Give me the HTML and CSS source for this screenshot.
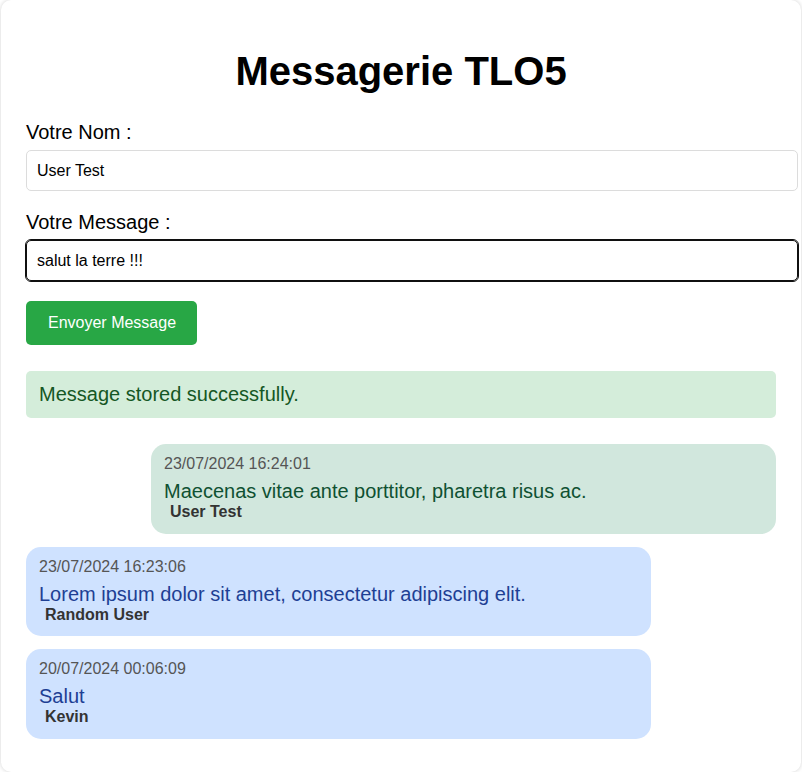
FILE: index.html
```html
<!DOCTYPE html>
<html lang="fr">
<head>
<meta charset="utf-8">
<title>Messagerie TLO5</title>
<link rel="stylesheet" href="styles.css">
</head>
<body>
<div class="container">
  <h1 class="title">Messagerie TLO5</h1>
  <form class="form">
    <label class="label" for="nom">Votre Nom :</label>
    <input class="input" id="nom" type="text" value="User Test">
    <label class="label" for="msg">Votre Message :</label>
    <input class="input input-focus" id="msg" type="text" value="salut la terre !!!">
    <button class="btn" type="button">Envoyer Message</button>
  </form>
  <div class="alert">Message stored successfully.</div>
  <div class="messages">
    <div class="bubble bubble-own">
      <div class="date">23/07/2024 16:24:01</div>
      <div class="text">Maecenas vitae ante porttitor, pharetra risus ac.</div>
      <div class="author">User Test</div>
    </div>
    <div class="bubble bubble-other">
      <div class="date">23/07/2024 16:23:06</div>
      <div class="text">Lorem ipsum dolor sit amet, consectetur adipiscing elit.</div>
      <div class="author">Random User</div>
    </div>
    <div class="bubble bubble-other">
      <div class="date">20/07/2024 00:06:09</div>
      <div class="text">Salut</div>
      <div class="author">Kevin</div>
    </div>
  </div>
</div>
</body>
</html>
```

FILE: styles.css
```css
html, body {
  margin: 0;
  padding: 0;
  background: #ffffff;
}
body {
  font-family: Arial, "Liberation Sans", sans-serif;
  color: #000;
}
.container {
  width: 750px;
  margin: 0 auto;
  padding: 21px 25px 33px;
  background: #fff;
  border-radius: 10px;
  box-shadow: 0 0 4px rgba(0, 0, 0, 0.18);
}
.title {
  font-size: 40px;
  font-weight: bold;
  text-align: center;
  margin: 27px 0 27px;
  line-height: 46px;
}
.form {
  display: flex;
  flex-direction: column;
  align-items: flex-start;
}
.label {
  font-size: 20px;
  line-height: 23px;
  margin-bottom: 6px;
}
.input {
  width: 750px;
  box-sizing: content-box;
  padding: 10px;
  font-size: 16px;
  font-family: Arial, "Liberation Sans", sans-serif;
  border: 1px solid #dcdcdc;
  border-radius: 5px;
  margin: 0 0 20px;
  height: 19px;
  color: #000;
  background: #fff;
}
.input-focus {
  border-color: #101010;
  outline: 1px solid #101010;
}
.btn {
  background: #28a745;
  color: #fff;
  border: none;
  border-radius: 5px;
  padding: 13px 21px 13px 22px;
  font-size: 16px;
  line-height: 18px;
  font-family: Arial, "Liberation Sans", sans-serif;
  margin: 0 0 26px;
  cursor: pointer;
}
.alert {
  background: #d4edda;
  color: #155724;
  font-size: 20px;
  line-height: 23px;
  padding: 12px 13px;
  border-radius: 5px;
  margin-bottom: 26px;
}
.messages {
  display: flex;
  flex-direction: column;
  gap: 13px;
}
.bubble {
  width: 600px;
  padding: 11px 12px 12.5px 13px;
  border-radius: 15px;
}
.bubble-own {
  align-self: flex-end;
  background: #d1e7dd;
}
.bubble-other {
  align-self: flex-start;
  background: #cfe2ff;
}
.date {
  font-size: 16px;
  line-height: 18px;
  color: #555;
  margin-bottom: 7px;
}
.text {
  font-size: 20px;
  line-height: 23px;
}
.bubble-own .text {
  color: #0f5132;
}
.bubble-other .text {
  color: #1e3f94;
}
.author {
  font-size: 16px;
  line-height: 18px;
  font-weight: bold;
  color: #333;
  padding-left: 6px;
}
```
